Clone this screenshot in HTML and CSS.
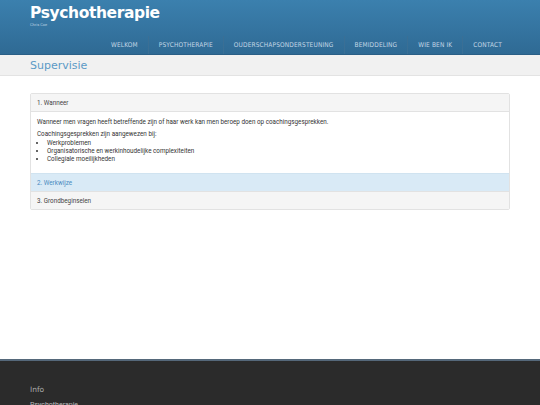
FILE: index.html
```html
<!DOCTYPE html>
<html>
<head>
<meta charset="utf-8">
<link rel="stylesheet" href="styles.css">
</head>
<body>
<header class="header">
  <div class="brand">
    <div class="title">Psychotherapie</div>
    <div class="subtitle">Chris Coe</div>
  </div>
  <nav class="nav">
    <a class="nav-item">Welkom</a>
    <a class="nav-item">Psychotherapie</a>
    <a class="nav-item">Ouderschapsondersteuning</a>
    <a class="nav-item">Bemiddeling</a>
    <a class="nav-item">Wie ben ik</a>
    <a class="nav-item last">Contact</a>
  </nav>
</header>
<div class="subheader">
  <h1 class="page-title">Supervisie</h1>
</div>
<main class="main">
  <div class="accordion">
    <div class="acc-head">1. Wanneer</div>
    <div class="acc-body">
      <p>Wanneer men vragen heeft betreffende zijn of haar werk kan men beroep doen op coachingsgesprekken.</p>
      <p class="tight">Coachingsgesprekken zijn aangewezen bij:</p>
      <ul>
        <li>Werkproblemen</li>
        <li>Organisatorische en werkinhoudelijke complexiteiten</li>
        <li>Collegiale moeilijkheden</li>
      </ul>
    </div>
    <div class="acc-head active">2. Werkwijze</div>
    <div class="acc-head">3. Grondbeginselen</div>
  </div>
</main>
<footer class="footer">
  <div class="footer-title">Info</div>
  <div class="footer-line">Psychotherapie</div>
</footer>
</body>
</html>
```

FILE: styles.css
```css
* { box-sizing: border-box; }
html, body { margin: 0; padding: 0; }
body {
  width: 540px;
  height: 405px;
  overflow: hidden;
  background: #fff;
  font-family: Roboto, "Liberation Sans", sans-serif;
  color: #333;
}
.header {
  height: 55px;
  background: linear-gradient(#3b80ae, #2f6a94);
  border-bottom: 1px solid #2a5f86;
  padding: 0 30px;
  display: flex;
  flex-direction: column;
}
.brand { padding-top: 3px; }
.title {
  font-family: "DejaVu Sans", sans-serif;
  font-weight: bold;
  font-size: 15.5px;
  color: #fff;
  line-height: 21px;
  letter-spacing: -0.4px;
}
.subtitle {
  font-size: 4px;
  color: #b9d0e1;
  line-height: 4px;
  margin-top: -1px;
}
.nav {
  margin-top: auto;
  display: flex;
  justify-content: flex-end;
  height: 18px;
  align-items: stretch;
}
.nav-item {
  font-family: "DejaVu Sans Condensed", "DejaVu Sans", sans-serif;
  font-size: 6.5px;
  text-transform: uppercase;
  color: #c3d6e5;
  padding: 0 10px 0;
  display: flex;
  align-items: center;
  border-right: 1px solid #3a6f95;
  letter-spacing: 0.15px;
}
.nav-item.last { border-right: none; padding-right: 8px; }
.subheader {
  height: 21px;
  background: #f1f1f1;
  border-bottom: 1px solid #e3e3e3;
  padding: 0 30px;
  display: flex;
  align-items: center;
}
.page-title {
  margin: 0;
  font-family: "DejaVu Sans", sans-serif;
  font-weight: normal;
  font-size: 11px;
  color: #5c9ac6;
}
.main {
  height: 283px;
  padding: 17px 30px 0;
}
.accordion {
  border: 1px solid #e2e2e2;
  border-radius: 2px;
  font-size: 6.3px;
}
.acc-head {
  height: 18px;
  background: #f5f5f5;
  padding: 0 6px;
  display: flex;
  align-items: center;
  color: #444;
  border-top: 1px solid #e2e2e2;
}
.acc-head:first-child { border-top: none; height: 17px; }
.acc-head.active {
  background: #d9eaf6;
  color: #4a8bbf;
  border-top-color: #d0e3f0;
}
.acc-body {
  border-top: 1px solid #e2e2e2;
  padding: 6px 6px 10px;
  background: #fff;
  line-height: 8.3px;
  color: #333;
}
.acc-body p { margin: 0 0 4px; }
.acc-body p.tight { margin: 0; }
.acc-body ul { margin: 0; padding-left: 10px; }
.footer {
  height: 60px;
  background: #2b2b2b;
  border-top: 2px solid #55687a;
  padding: 24px 30px 0;
}
.footer-title {
  font-family: "DejaVu Sans", sans-serif;
  font-size: 7.5px;
  color: #aaa;
  line-height: 10px;
}
.footer-line {
  margin-top: 6px;
  font-size: 7px;
  color: #bbb;
}
```
